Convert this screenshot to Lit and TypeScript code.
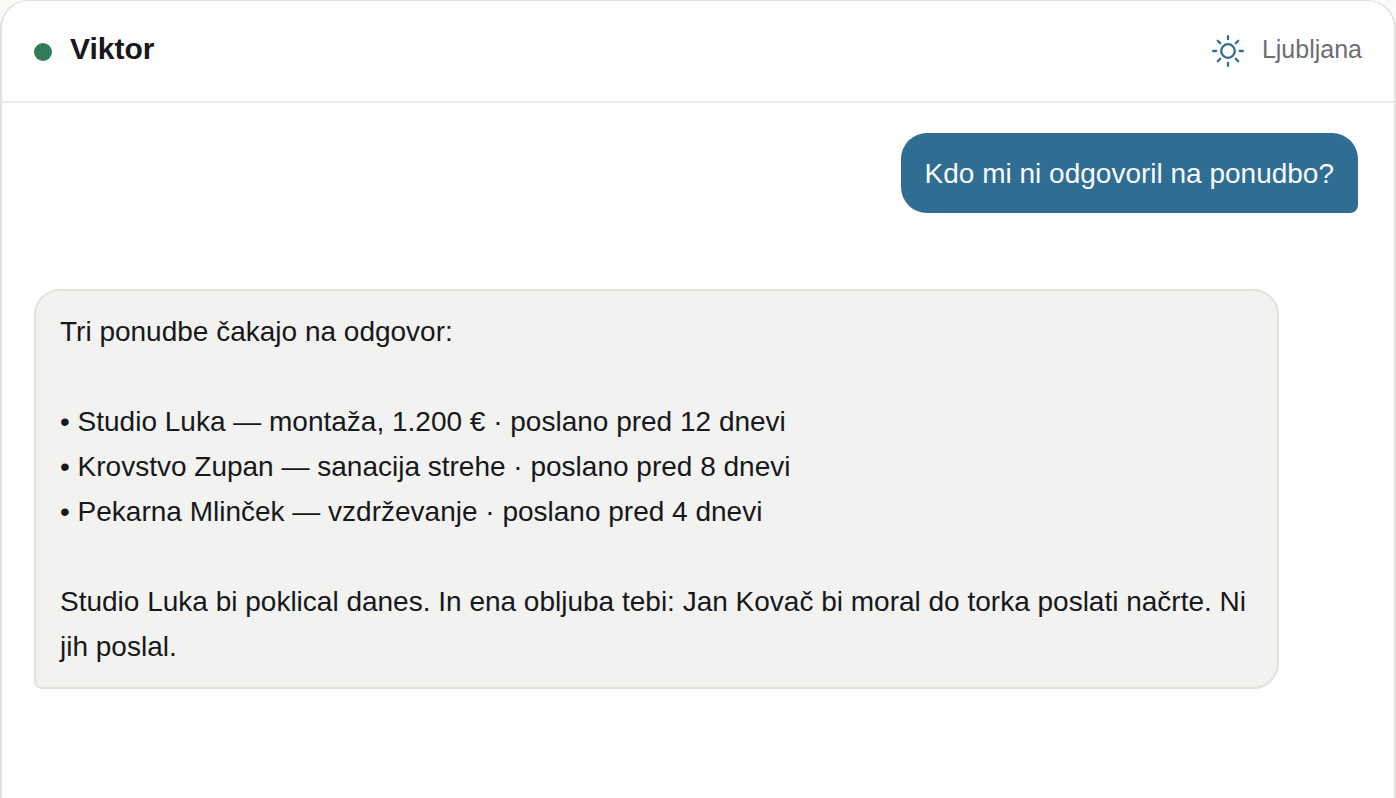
import { LitElement, html, css } from "lit";
import { customElement, property } from "lit/decorators.js";

@customElement("chat-bubble")
class ChatBubble extends LitElement {
  @property({ reflect: true }) from = "assistant";
  @property() text = "";

  static styles = css`
    :host {
      display: flex;
      justify-content: flex-start;
    }
    :host([from="user"]) {
      justify-content: flex-end;
    }
    .bubble {
      box-sizing: border-box;
      max-width: 94%;
      margin: 0;
      padding: 18px 24px;
      border: 2px solid #e2e2dd;
      border-radius: 26px 26px 26px 8px;
      background: #f2f2f0;
      color: #16181b;
      font-size: 28px;
      line-height: 45px;
      white-space: pre-line;
    }
    :host([from="user"]) .bubble {
      padding: 18px 24px 17px;
      border: 0;
      border-radius: 26px 26px 8px 26px;
      background: #2f6d93;
      color: #f8fbfd;
    }
  `;

  render() {
    return html`<p class="bubble">${this.text}</p>`;
  }
}

@customElement("app-root")
class AppRoot extends LitElement {
  static styles = css`
    :host {
      display: block;
      background: #fafaf8;
      font-family: "Liberation Sans", Arial, sans-serif;
      color: #16181b;
    }
    .card {
      box-sizing: border-box;
      min-height: 100vh;
      border: 2px solid #e2e2dd;
      border-width: 1px 2px 0;
      border-radius: 28px 28px 0 0;
      background: #fefefe;
    }
    .header {
      display: flex;
      align-items: center;
      justify-content: space-between;
      padding: 28px 32px 32px;
      border-bottom: 2px solid #ebebe8;
    }
    .person,
    .place {
      display: flex;
      align-items: center;
    }
    .person {
      gap: 18px;
    }
    .place {
      gap: 18px;
      color: #6b6e72;
      font-size: 25px;
      line-height: 40px;
    }
    .status {
      width: 18px;
      height: 18px;
      margin-top: 6px;
      border-radius: 50%;
      background: #2f7d5b;
    }
    .name {
      margin: 0;
      font-size: 30px;
      font-weight: 700;
      line-height: 40px;
    }
    .sun {
      width: 32px;
      height: 32px;
      margin-top: 4px;
      fill: none;
      stroke: #2f6d93;
      stroke-width: 2.3;
      stroke-linecap: round;
    }
    .messages {
      display: flex;
      flex-direction: column;
      gap: 76px;
      padding: 30px 36px 32px 32px;
    }
  `;

  private messages = [
    { from: "user", text: "Kdo mi ni odgovoril na ponudbo?" },
    {
      from: "assistant",
      text: [
        "Tri ponudbe čakajo na odgovor:",
        "",
        "• Studio Luka — montaža, 1.200 € · poslano pred 12 dnevi",
        "• Krovstvo Zupan — sanacija strehe · poslano pred 8 dnevi",
        "• Pekarna Mlinček — vzdrževanje · poslano pred 4 dnevi",
        "",
        "Studio Luka bi poklical danes. In ena obljuba tebi: Jan Kovač bi moral do torka poslati načrte. Ni jih poslal.",
      ].join("\n"),
    },
  ];

  render() {
    return html`
      <section class="card">
        <header class="header">
          <div class="person">
            <span class="status"></span>
            <h1 class="name">Viktor</h1>
          </div>
          <div class="place">
            <svg class="sun" viewBox="0 0 32 32" aria-hidden="true">
              <circle cx="16" cy="16" r="6.8" />
              <path
                d="M16 1.2v3M16 27.8v3M1.2 16h3M27.8 16h3M5.8 5.8l2.4 2.4M23.8 23.8l2.4 2.4M5.8 26.2l2.4-2.4M23.8 8.2l2.4-2.4"
              />
            </svg>
            <span>Ljubljana</span>
          </div>
        </header>
        <main class="messages">
          ${this.messages.map(
            (m) => html`<chat-bubble from=${m.from} .text=${m.text}></chat-bubble>`
          )}
        </main>
      </section>
    `;
  }
}
